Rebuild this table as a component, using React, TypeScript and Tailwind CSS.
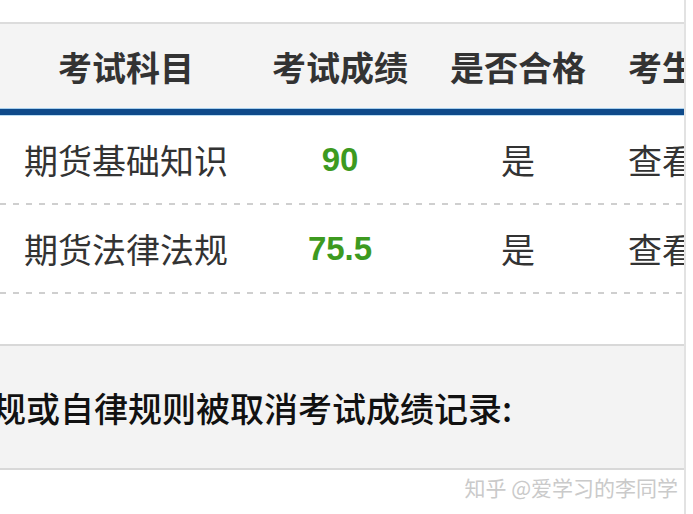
const cjk = "font-['Noto_Sans_CJK_SC','Noto_Sans',sans-serif]"

const rows = [
  { name: '期货基础知识', score: '90', pass: '是' },
  { name: '期货法律法规', score: '75.5', pass: '是' },
]

const Dashed = () => (
  <div className="h-[2px] w-full bg-[linear-gradient(to_right,#cfcfcf_45%,transparent_45%)] bg-[length:13px_2px]" />
)

export default function App() {
  return (
    <div className={`w-[693px] h-[514px] bg-white overflow-hidden ${cjk}`}>
      <div className="w-[686px] h-full border-r-2 border-[#e2e2e2] overflow-hidden flex flex-col">
        <div className="h-[22px]" />
        {/* header */}
        <div className="border-t-2 border-[#dcdcdc] bg-[#f4f4f4] h-[86px] flex items-center text-[34px] font-bold text-[#333] whitespace-nowrap">
          <div className="w-[252px] shrink-0 text-center">考试科目</div>
          <div className="w-[176px] shrink-0 text-center">考试成绩</div>
          <div className="w-[180px] shrink-0 text-center">是否合格</div>
          <div className="w-[200px] shrink-0 pl-[20px]">考生信息</div>
        </div>
        <div className="h-[1px] bg-[#a8d0ee]" />
        <div className="h-[6px] bg-[#0f4a8a]" />
        <div className="h-[1px] bg-[#b9dcf3]" />

        {rows.map((r) => (
          <div key={r.name}>
            <div className="h-[87px] flex items-center text-[34px] text-[#333] whitespace-nowrap">
              <div className="w-[252px] shrink-0 text-center">{r.name}</div>
              <div className="w-[176px] shrink-0 text-center font-['Liberation_Sans',Arial,sans-serif] font-bold text-[33px] text-[#3d9a1f]">
                {r.score}
              </div>
              <div className="w-[180px] shrink-0 text-center">{r.pass}</div>
              <div className="w-[200px] shrink-0 pl-[20px]">查看</div>
            </div>
            <Dashed />
          </div>
        ))}

        <div className="h-[50px]" />
        {/* notice */}
        <div className="border-y-2 border-[#d8d8d8] bg-[#f3f3f3] h-[126px] flex items-center">
          <p className="ml-[-8px] text-[34px] font-medium text-[#111] whitespace-nowrap">
            规或自律规则被取消考试成绩记录:
          </p>
        </div>
        <div className="flex justify-end pr-[6px] pt-[2px]">
          <span className="text-[21px] text-[#cacaca] whitespace-nowrap">知乎 @爱学习的李同学</span>
        </div>
      </div>
    </div>
  )
}
